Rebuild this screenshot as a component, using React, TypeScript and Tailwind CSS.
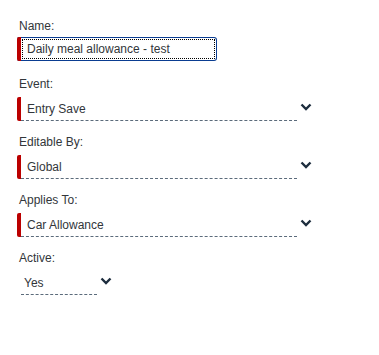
import React from "react";

function Chevron() {
  return (
    <svg width="12" height="8" viewBox="0 0 12 8" className="block">
      <path d="M1.5 1.5 L6 6 L10.5 1.5" fill="none" stroke="#1d2d3e" strokeWidth="2.4" strokeLinecap="butt" strokeLinejoin="miter" />
    </svg>
  );
}

function SelectField({ label, value, width, required = true }: { label: string; value: string; width: string; required?: boolean }) {
  return (
    <div className="flex flex-col">
      <div className="text-[12px] leading-[14px] text-[#32363a] pl-[2px]">{label}</div>
      <div className={`mt-[6px] flex items-start ${width}`}>
        <div className="flex flex-1 h-[24px]">
          <div className={required ? "w-[4px] h-[24px] bg-[#b00] rounded-l-[2px]" : "w-[4px] h-[24px]"} />
          <div className={`flex-1 border-b border-dashed border-[#5b6b7b] flex items-center ${required ? "pl-[6px]" : "pl-[3px]"} pt-[1px] text-[12px] text-[#32363a]`}>
            {value}
          </div>
        </div>
        <div className="pl-[3px] pt-[6px]">
          <Chevron />
        </div>
      </div>
    </div>
  );
}

export default function App() {
  return (
    <div className="w-[379px] h-[355px] bg-white pl-[17px] pt-[19px]" style={{ fontFamily: '"Liberation Sans", Arial, sans-serif' }}>
      <div className="flex flex-col">
        <div className="flex flex-col">
          <div className="text-[12px] leading-[14px] text-[#32363a] pl-[2px]">Name:</div>
          <div className="mt-[4px] w-[200px] h-[24px] flex border border-[#0a3d91] border-l-0 rounded-r-[3px] rounded-l-[2px] relative">
            <div className="w-[4px] -my-[1px] bg-[#b00] rounded-l-[2px]" />
            <div className="flex-1 m-[1px] border border-dotted border-black flex items-center pl-[4px] text-[12px] text-[#32363a]">
              Daily meal allowance - test
            </div>
          </div>
        </div>
        <div className="mt-[16px]">
          <SelectField label="Event:" value="Entry Save" width="w-[295px]" />
        </div>
        <div className="mt-[14px]">
          <SelectField label="Editable By:" value="Global" width="w-[295px]" />
        </div>
        <div className="mt-[14px]">
          <SelectField label="Applies To:" value="Car Allowance" width="w-[295px]" />
        </div>
        <div className="mt-[14px]">
          <SelectField label="Active:" value="Yes" width="w-[95px]" required={false} />
        </div>
      </div>
    </div>
  );
}
